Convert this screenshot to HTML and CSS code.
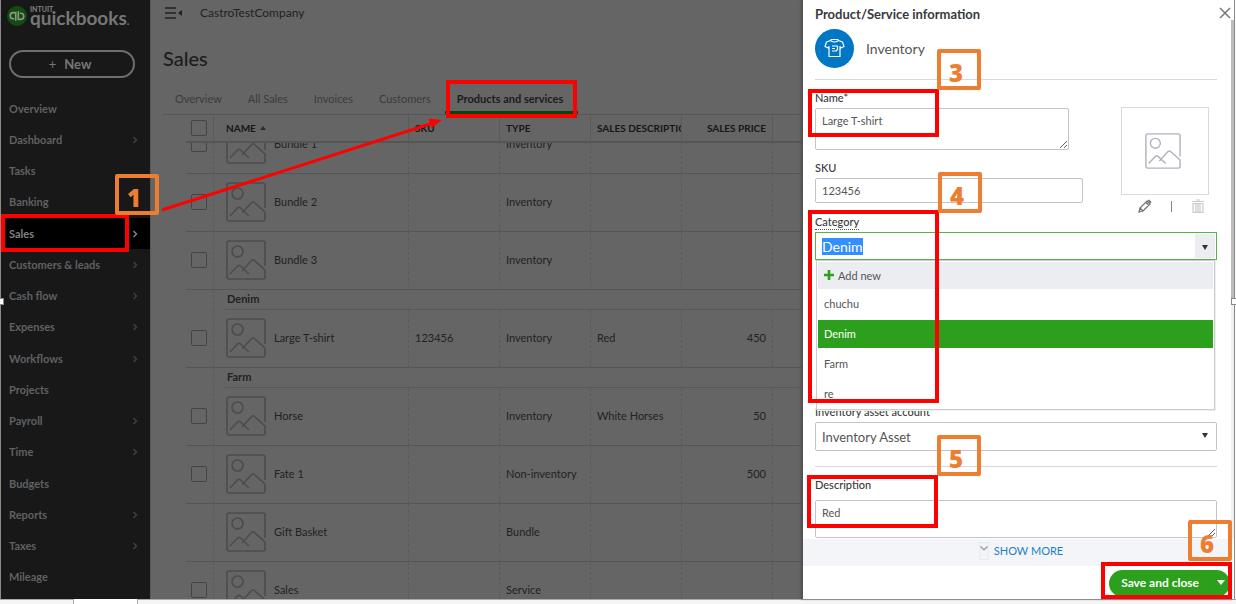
FILE: index.html
```html
<!DOCTYPE html>
<html lang="en">
<head>
<meta charset="utf-8">
<title>Products and services</title>
<link rel="stylesheet" href="styles.css">
</head>
<body>
<svg class="defs" aria-hidden="true">
  <symbol id="picture" viewBox="0 0 40 40">
    <path d="M39 26V3a2 2 0 0 0-2-2H3a2 2 0 0 0-2 2v34a2 2 0 0 0 2 2h34a2 2 0 0 0 2-2v-7L28.500 20.500q-1.500-1.200-3 0L16 31M4 34l7.500-8q1.500-1.200 3 0l8.500 8" fill="none" stroke="currentColor" stroke-width="1.600"/>
    <circle cx="11.500" cy="11.500" r="5.500" fill="none" stroke="currentColor" stroke-width="1.600"/>
  </symbol>
  <symbol id="chevron" viewBox="0 0 6 8">
    <path d="M1.500 1l3 3-3 3" fill="none" stroke="currentColor" stroke-width="1.400"/>
  </symbol>
</svg>
<div class="app">
  <div class="workspace">
    <aside class="sidebar">
      <div class="logo">
        <svg class="logo-mark" viewBox="0 0 20 20" aria-hidden="true">
          <circle cx="10" cy="10" r="10" fill="#124d0f"/>
          <g fill="none" stroke="#8d978c" stroke-width="1.600">
            <path d="M8.700 14.800V6.600H6.300a3 3 0 0 0 0 6.100h.8M11.300 5.200v8.200h2.400a3 3 0 0 0 0-6.100h-.8"/>
          </g>
        </svg>
        <div class="wordmark"><span class="intuit">INTUIT</span><span class="brand">quickbooks<small>.</small></span></div>
      </div>
      <button class="new-btn" type="button"><span class="plus">+</span>New</button>
      <nav class="nav">
        <a href="#">Overview</a>
        <a href="#">Dashboard<svg><use href="#chevron"/></svg></a>
        <a href="#">Tasks</a>
        <a href="#">Banking</a>
        <a href="#" class="active">Sales<svg><use href="#chevron"/></svg></a>
        <a href="#">Customers &amp; leads<svg><use href="#chevron"/></svg></a>
        <a href="#">Cash flow<svg><use href="#chevron"/></svg></a>
        <a href="#">Expenses<svg><use href="#chevron"/></svg></a>
        <a href="#">Workflows<svg><use href="#chevron"/></svg></a>
        <a href="#">Projects</a>
        <a href="#">Payroll<svg><use href="#chevron"/></svg></a>
        <a href="#">Time<svg><use href="#chevron"/></svg></a>
        <a href="#">Budgets</a>
        <a href="#">Reports<svg><use href="#chevron"/></svg></a>
        <a href="#">Taxes<svg><use href="#chevron"/></svg></a>
        <a href="#">Mileage</a>
      </nav>
    </aside>

    <main class="content">
      <header class="topbar">
        <svg class="menu-icon" viewBox="0 0 18 12" aria-hidden="true"><path d="M0 1h11M0 6h11M0 11h11" stroke="#222" stroke-width="1.500"/><path d="M17 3v6l-4-3z" fill="#222"/></svg>
        <span>CastroTestCompany</span>
      </header>
      <h1>Sales</h1>
      <nav class="tabs">
        <a href="#">Overview</a><a href="#">All Sales</a><a href="#">Invoices</a><a href="#">Customers</a><a href="#" class="active">Products and services</a>
      </nav>
      <table class="grid head">
        <colgroup><col class="c-check"><col class="c-name"><col class="c-mid"><col class="c-mid"><col class="c-mid"><col class="c-mid"><col></colgroup>
        <thead><tr><th><input type="checkbox" aria-label="Select all"></th><th class="name">NAME <i class="sort"></i></th><th>SKU</th><th>TYPE</th><th>SALES DESCRIPTION</th><th class="num">SALES PRICE</th><th></th></tr></thead>
      </table>
      <div class="rows">
        <table class="grid body">
          <colgroup><col class="c-check"><col class="c-name"><col class="c-mid"><col class="c-mid"><col class="c-mid"><col class="c-mid"><col></colgroup>
          <tbody>
            <tr><td><input type="checkbox" aria-label="Bundle 1"></td><td class="name"><div><svg><use href="#picture"/></svg>Bundle 1</div></td><td></td><td>Inventory</td><td></td><td></td><td></td></tr>
            <tr><td><input type="checkbox" aria-label="Bundle 2"></td><td class="name"><div><svg><use href="#picture"/></svg>Bundle 2</div></td><td></td><td>Inventory</td><td></td><td></td><td></td></tr>
            <tr><td><input type="checkbox" aria-label="Bundle 3"></td><td class="name"><div><svg><use href="#picture"/></svg>Bundle 3</div></td><td></td><td>Inventory</td><td></td><td></td><td></td></tr>
            <tr class="group"><td></td><th colspan="6"><div>Denim</div></th></tr>
            <tr><td><input type="checkbox" aria-label="Large T-shirt"></td><td class="name"><div><svg><use href="#picture"/></svg>Large T-shirt</div></td><td>123456</td><td>Inventory</td><td>Red</td><td class="num">450</td><td></td></tr>
            <tr class="group"><td></td><th colspan="6"><div>Farm</div></th></tr>
            <tr><td><input type="checkbox" aria-label="Horse"></td><td class="name"><div><svg><use href="#picture"/></svg>Horse</div></td><td></td><td>Inventory</td><td>White Horses</td><td class="num">50</td><td></td></tr>
            <tr><td><input type="checkbox" aria-label="Fate 1"></td><td class="name"><div><svg><use href="#picture"/></svg>Fate 1</div></td><td></td><td>Non-inventory</td><td></td><td class="num">500</td><td></td></tr>
            <tr><td></td><td class="name"><div><svg><use href="#picture"/></svg>Gift Basket</div></td><td></td><td>Bundle</td><td></td><td></td><td></td></tr>
            <tr><td><input type="checkbox" aria-label="Sales"></td><td class="name"><div><svg><use href="#picture"/></svg>Sales</div></td><td></td><td>Service</td><td></td><td></td><td></td></tr>
          </tbody>
        </table>
      </div>
    </main>

    <section class="drawer">
      <button class="close" type="button" aria-label="Close"><svg viewBox="0 0 12 12"><path d="M1 1l10 10M11 1L1 11" stroke="#777" stroke-width="1.500"/></svg></button>
      <div class="scrollbar"><i></i></div>
      <form class="form">
        <h2>Product/Service information</h2>
        <div class="kind">
          <svg viewBox="0 0 39 39" aria-hidden="true">
            <circle cx="19.500" cy="19.500" r="19.500" fill="#0077c5"/>
            <g fill="none" stroke="#fff" stroke-width="1.200" stroke-linejoin="round">
              <path d="M15.500 11.500q4 3 8 0l4 1.500 1.500 4.500-3 1.500-1-1.500v10H14v-10L13 19l-3-1.500 1.500-4.500z"/>
              <path d="M15.500 10.500h8M17 17h5.500v3.500L21 22h-4M17 19.500h3"/>
            </g>
          </svg>
          <span>Inventory</span>
        </div>
        <div class="top-fields">
          <div class="left">
            <label for="name">Name*</label>
            <textarea id="name" class="name-box">Large T-shirt</textarea>
            <label for="sku">SKU</label>
            <input id="sku" class="sku-box" type="text" value="123456">
          </div>
          <div class="image-picker">
            <div class="image-box"><svg><use href="#picture"/></svg></div>
            <div class="image-tools">
              <button type="button" aria-label="Edit image"><svg viewBox="0 0 14 14"><path d="M1 13l1-4 7-7 3 3-7 7zM2 9l3 3M8 3.500l3 3" fill="none" stroke="#6b6c72" stroke-width="1.200"/><path d="M9.500 1.500L11 .5l2.500 2.500-1 1.500z" fill="#6b6c72"/></svg></button>
              <span class="bar"></span>
              <button type="button" aria-label="Delete image"><svg viewBox="0 0 14 14"><path d="M1 2.500h12M5 1h4M2 4.500h10V13.300H2zM5 5v8M7 5v8M9 5v8" fill="none" stroke="#c7cad1" stroke-width="1.200"/></svg></button>
            </div>
          </div>
        </div>
        <label class="dotted" for="category">Category</label>
        <div class="combo">
          <input id="category" type="text" value="Denim" autocomplete="off">
          <button type="button" aria-label="Open list"><i class="caret"></i></button>
          <ul class="menu">
            <li class="add"><svg viewBox="0 0 10 10" aria-hidden="true"><path d="M5 0v10M0 5h10" stroke="#2ca01c" stroke-width="2.600"/></svg>Add new</li>
            <li>chuchu</li>
            <li class="chosen">Denim</li>
            <li>Farm</li>
            <li>re</li>
          </ul>
        </div>
        <div class="asset">
          <label for="asset">Inventory asset account</label>
          <div class="select-wrap"><select id="asset"><option>Inventory Asset</option></select><i class="caret"></i></div>
        </div>
        <div class="description">
          <label for="desc">Description</label>
          <textarea id="desc">Red</textarea>
        </div>
      </form>
      <button class="more" type="button"><svg viewBox="0 0 8 16"><path d="M.5.500h7v15h-7z" fill="none" stroke="#e4ecf0"/><path d="M1 4l3 3 3-3" fill="none" stroke="#999" stroke-width="1.200"/></svg>SHOW MORE</button>
      <footer class="actions">
        <button class="save" type="button">Save and close<i class="caret"></i></button>
      </footer>
      <div class="mark mark-name"></div>
      <div class="mark mark-category"></div>
      <div class="mark mark-desc"></div>
      <div class="mark mark-save"></div>
      <div class="step step-3">3</div>
      <div class="step step-4">4</div>
      <div class="step step-5">5</div>
      <div class="step step-6">6</div>
      <i class="handle handle-right"></i>
    </section>

    <div class="mark mark-nav"></div>
    <div class="mark mark-tab"></div>
    <div class="step step-1">1</div>
    <svg class="arrow" viewBox="0 0 290 100" aria-hidden="true"><path d="M2 95L273 8" stroke="#f00" stroke-width="3"/><path d="M282 5l-10.500 8-3-9.500z" fill="#f00"/></svg>
    <i class="handle handle-left"></i>
  </div>
  <div class="strip"><i></i></div>
</div>
<script src="script.js"></script>
</body>
</html>
```

FILE: styles.css
```css
* { box-sizing: border-box; }
body { margin: 0; font-family: Lato, "Open Sans", sans-serif; font-size: 11px; line-height: 14px; }
button, input, textarea, select { font: inherit; color: inherit; margin: 0; }
button { cursor: pointer; padding: 0; border: 0; background: none; }
a { color: inherit; text-decoration: none; }
h1, h2, ul { margin: 0; padding: 0; }
.defs { display: none; }

.app { display: flex; flex-direction: column; height: 100vh; min-height: 604px; }
.workspace { position: relative; flex: 1; min-height: 0; display: flex; border-left: 1px solid #8a8a8a; }
.strip { height: 5px; padding-left: 73px; background: #f5f5f5; border-top: 1px solid #aaa; }
.strip i { display: block; width: 65px; height: 5px; margin-top: -1px; background: #fff; border: solid #aaa; border-width: 0 1px; }

/* Sidebar */
.sidebar { width: 149px; flex: none; display: flex; flex-direction: column; background: #181818; color: #5f6164; font-weight: 700; padding-bottom: 6px; }
.logo { display: flex; gap: 3px; height: 50px; padding: 6px 0 0 6px; }
.logo-mark { width: 20px; height: 20px; flex: none; }
.wordmark { display: flex; flex-direction: column; color: #777; }
.intuit { font-size: 7px; line-height: 7px; height: 4px; font-weight: 900; }
.brand { font-size: 19px; line-height: 15px; font-weight: 700; }
.brand small { font-size: 11px; }
.new-btn { height: 28px; flex: none; margin: 0 15px 15px 8px; border: 2px solid #6e6e6e; border-radius: 14px; color: #777; font-size: 13px; font-weight: 700; padding-right: 4px; }
.plus { margin-right: 8px; font-weight: 400; }
.nav { flex: 1; display: grid; grid-auto-rows: 1fr; }
.nav a { display: flex; align-items: center; justify-content: space-between; padding: 0 12px 0 8px; }
.nav svg { width: 6px; height: 8px; color: #404244; }
.nav .active { background: #000; color: #808080; }
.nav .active svg { color: #888; }

/* Page behind the drawer */
.content { flex: 1; min-width: 0; display: flex; flex-direction: column; background: #656565; color: #222; padding-left: 13px; overflow: hidden; box-shadow: inset 1px 0 #585858; }
.topbar { display: flex; align-items: center; gap: 17px; height: 26px; padding-left: 2px; font-size: 12px; flex: none; }
.menu-icon { width: 18px; height: 12px; }
h1 { font-size: 20px; line-height: 24px; font-weight: 500; color: #1c1c1c; margin: 20px 0 12px; }
.tabs { display: flex; gap: 2px; height: 33px; flex: none; border-bottom: 1px solid #565656; color: #3a3b3c; }
.tabs a { padding: 10px 12px 0; white-space: nowrap; }
.tabs .active { color: #1c1c1c; font-weight: 700; border-bottom: 3px solid #0d4208; padding-right: 15px; }
.grid { border-collapse: separate; border-spacing: 0; table-layout: fixed; width: calc(100% - 23px); margin-left: 23px; }
.c-check { width: 28px; }
.c-name { width: 195px; }
.c-mid { width: 91px; }
.grid th, .grid td { padding: 0 6px; text-align: left; white-space: nowrap; overflow: hidden; border-right: 1px dashed #5b5b5b; border-bottom: 1px solid #555; }
.grid th:first-child, .grid td:first-child { padding: 0 0 0 5px; }
.grid th.num, .grid td.num { text-align: right; }
.grid .name { padding-left: 12px; }
.grid th { font-size: 10px; font-weight: 700; color: #161616; }
.head { flex: none; }
.head th { height: 28px; border-right-style: solid; border-bottom: 2px solid #555; }
.sort { display: inline-block; border: solid transparent; border-width: 0 3px 4px; border-bottom-color: #222e38; margin: 0 0 2px 2px; }
.rows { flex: 1; min-height: 0; overflow: hidden; }
.body { margin-top: -27px; }
.grid.body td { height: 58px; padding-bottom: 2px; }
.body .name div { display: flex; align-items: center; gap: 8px; }
.body svg { width: 40px; height: 40px; color: #4a4c4f; flex: none; }
.grid.body .group td { height: 20px; border-bottom: 0; }
.body .group th { height: 20px; border: 0; padding: 0 0 0 11px; font-size: 11px; color: #222; }
.group div { height: 20px; line-height: 18px; padding-left: 2px; border-bottom: 1px solid #585858; }
.grid input { appearance: none; display: block; width: 16px; height: 16px; border: 1px solid #444; border-radius: 2px; }

/* Drawer */
.drawer { position: relative; width: 432px; flex: none; display: flex; flex-direction: column; margin-right: 1px; background: #fff; color: #393a3d; border-right: 1px solid #8a8a8a; box-shadow: -2px 0 2px #505050; }
.close { position: absolute; top: 7px; right: 3px; width: 12px; height: 12px; z-index: 2; }
.close svg { display: block; }
.scrollbar { position: absolute; top: 20px; right: 0; width: 3px; height: 519px; background: #f0f0f0; }
.scrollbar i { display: block; height: 278px; background: #bdbdbd; }
.form { flex: 1; min-height: 0; padding: 4px 17px 0 12px; }
h2 { font-size: 13px; line-height: 20px; font-weight: 700; }
.kind { display: flex; align-items: center; gap: 12px; padding: 5px 0 11px; border-bottom: 1px solid #d4d7dc; font-size: 14px; color: #555; }
.kind svg { width: 39px; height: 39px; }
label { display: block; font-weight: 500; margin-bottom: 3px; width: max-content; }
.form input, .form textarea, select { display: block; border: 1px solid #c1c4cb; border-radius: 2px; padding: 5px 6px; background: #fff; color: #555; outline: 0; }
.top-fields { display: flex; justify-content: space-between; padding: 11px 8px 2px 0; }
.left { flex: 0 1 268px; }
.name-box { width: calc(100% - 14px); height: 42px; margin-bottom: 11px; }
.form .sku-box { width: 100%; height: 25px; padding-bottom: 6px; }
.image-picker { width: 88px; padding-top: 16px; }
.image-box { height: 88px; display: grid; place-items: center; border: 1px solid #d8dade; }
.image-box svg { width: 36px; height: 36px; color: #b0b4be; margin-right: 4px; }
.image-tools { display: flex; align-items: center; justify-content: space-between; padding: 4px 4px 0 17px; }
.image-tools button, .image-tools svg { display: block; width: 14px; height: 14px; }
.bar { width: 1px; height: 11px; background: #888; }
.dotted { border-bottom: 1px dotted #555; margin-bottom: 2px; }
.combo { position: relative; display: flex; height: 28px; border: 1px solid #53b547; padding: 1px; }
.combo input { flex: 1; min-width: 0; border: 0; padding: 0 5px; font-size: 14px; }
.form .combo input { border: 0; padding: 0 5px; }
.combo input::selection { background: #338fff; color: #fff; }
.combo button { width: 20px; background: #ecedf1; }
.caret { display: inline-block; border: solid transparent; border-width: 5px 3px 0; border-top-color: #333; }
.menu { position: absolute; z-index: 1; top: 27px; left: 0; right: 1px; padding: 1px; list-style: none; background: #fff; border: 1px solid #c9ccd3; box-shadow: 1px 1px #eee; color: #555; }
.menu li { height: 28px; line-height: 27px; padding-left: 6px; margin-bottom: 2px; }
.menu li:last-child { margin: 0; }
.menu .add { height: 27px; background: #ecedf1; margin-bottom: 1px; }
.menu .add svg { width: 10px; height: 10px; margin-right: 4px; }
.menu .chosen { background: #2ca01c; color: #fff; }
.asset { padding: 145px 0 15px; border-bottom: 1px solid #d4d7dc; }
.select-wrap { position: relative; }
.select-wrap .caret { position: absolute; right: 9px; top: 11px; pointer-events: none; }
select { width: 100%; height: 29px; appearance: none; font-size: 13px; }
.description { padding-top: 11px; }
.description label { margin-bottom: 8px; }
.description textarea { width: 100%; height: 38px; }
.more { display: flex; align-items: center; justify-content: center; gap: 5px; height: 27px; margin: 0 3px 0 0; padding: 0 0 3px 8px; background: #f4f5f8; color: #1b81c5; flex: none; position: relative; }
.more svg { width: 10px; height: 18px; }
.actions { display: flex; justify-content: flex-end; padding: 4px 4px 2px; height: 33px; flex: none; }
.save { display: flex; align-items: center; gap: 18px; padding: 0 5px 2px 12px; border-radius: 14px; background: #2ca01c; color: #fff; font-size: 12px; font-weight: 700; }
.save .caret { border-width: 5px 4px 0; border-top-color: #fff; }

/* Walkthrough annotations */
.mark { position: absolute; z-index: 3; width: 131px; border: 4px solid #f00; }
.step { position: absolute; z-index: 3; width: 44px; height: 41px; border: 4px solid #ed7d31; border-radius: 2px; color: #ed7d31; font: 800 24px/32px "Open Sans", sans-serif; text-align: center; padding: 4px 6px 0 0; }
.mark-nav { left: 0; top: 214px; width: 128px; height: 38px; }
.mark-tab { left: 445px; top: 80px; height: 38px; }
.mark-name { left: 5px; top: 89px; height: 48px; }
.mark-category { left: 5px; top: 210px; height: 193px; }
.mark-desc { left: 4px; top: 475px; height: 53px; }
.mark-save { right: 2px; bottom: 0; height: 37px; }
.step-1 { left: 114px; top: 174px; }
.step-3 { left: 134px; top: 49px; }
.step-4 { left: 135px; top: 172px; }
.step-5 { left: 134px; top: 435px; }
.step-6 { right: 2px; bottom: 38px; }
.arrow { position: absolute; left: 159px; top: 115px; width: 290px; height: 100px; }
.handle { position: absolute; z-index: 4; top: 298px; width: 5px; height: 7px; background: #fff; border: 1px solid #888; }
.handle-left { left: -1px; border-left: 0; width: 4px; }
.handle-right { right: -2px; border-right: 0; }
```

FILE: script.js
```js
const category = document.getElementById('category');
category.focus();
category.select();
```
